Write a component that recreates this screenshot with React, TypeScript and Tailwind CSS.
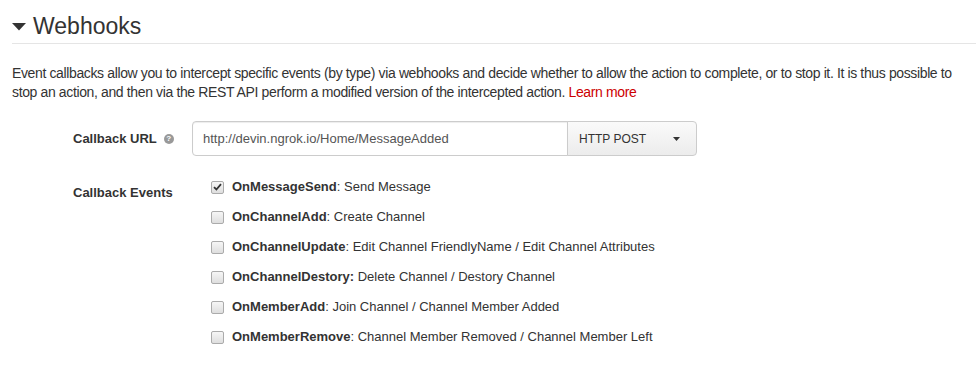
import React from "react";

const events: [string, string, boolean, boolean][] = [
  ["OnMessageSend", "Send Message", true, false],
  ["OnChannelAdd", "Create Channel", false, false],
  ["OnChannelUpdate", "Edit Channel FriendlyName / Edit Channel Attributes", false, false],
  ["OnChannelDestory", "Delete Channel / Destory Channel", false, true],
  ["OnMemberAdd", "Join Channel / Channel Member Added", false, false],
  ["OnMemberRemove", "Channel Member Removed / Channel Member Left", false, false],
];

function Box({ checked }: { checked: boolean }) {
  return (
    <span className="w-[13px] h-[13px] rounded-[2px] border border-[#ababab] bg-gradient-to-b from-[#f6f6f6] to-[#dedede] flex items-center justify-center shrink-0">
      {checked && (
        <svg width="9" height="8" viewBox="0 0 9 8">
          <path d="M1 4.2 L3.4 6.5 L8 1.2" stroke="#333" strokeWidth="1.8" fill="none" />
        </svg>
      )}
    </span>
  );
}

export default function App() {
  return (
    <div className="w-[976px] h-[371px] bg-white text-[#333] overflow-hidden" style={{ fontFamily: '"Liberation Sans", Arial, sans-serif' }}>
      <div className="pl-[12px] pt-[11px]">
        <div className="flex items-center h-[30px]">
          <svg width="14" height="8" viewBox="0 0 14 8" className="mr-[7px] mt-[1px]">
            <path d="M0 0 L14 0 L7 7.5 Z" fill="#333" />
          </svg>
          <span className="text-[23px] leading-[30px]">Webhooks</span>
        </div>
        <div className="mt-[2px] h-[1px] bg-[#e5e5e5]" />
        <p className="mt-[20px] pr-[10px] text-[14px] leading-[19px] tracking-[-0.37px]">
          Event callbacks allow you to intercept specific events (by type) via webhooks and decide whether to allow the action to complete, or to stop it. It is thus possible to stop an action, and then via the REST API perform a modified version of the intercepted action.{" "}
          <span className="text-[#cc0000]">Learn more</span>
        </p>
        <div className="mt-[19px] flex items-center">
          <div className="w-[180px] pl-[61px] flex items-center text-[13px] font-bold">
            Callback URL
            <span className="ml-[7px] w-[10px] h-[10px] rounded-full bg-[#999] text-white text-[8px] leading-[10px] text-center font-bold">?</span>
          </div>
          <div className="flex h-[35px]">
            <div className="w-[376px] border border-[#ccc] rounded-l-[4px] flex items-center pl-[10px] text-[13px] text-[#555] shadow-[inset_0_1px_1px_rgba(0,0,0,0.075)]">
              http://devin.ngrok.io/Home/MessageAdded
            </div>
            <div className="w-[130px] -ml-[1px] border border-[#ccc] rounded-r-[4px] bg-gradient-to-b from-[#fafafa] to-[#ececec] flex items-center pl-[11px] pr-[16px] justify-between text-[12px] text-[#333]">
              <span>HTTP POST</span>
              <svg width="7" height="4" viewBox="0 0 7 4"><path d="M0 0 L7 0 L3.5 4 Z" fill="#333" /></svg>
            </div>
          </div>
        </div>
        <div className="mt-[16px] flex">
          <div className="w-[199px] pl-[61px] text-[13px] font-bold pt-[11px]">Callback Events</div>
          <div className="flex flex-col">
            {events.map(([name, desc, checked, colonBold]) => (
              <div key={name} className="h-[30px] flex items-center text-[13px]">
                <Box checked={checked} />
                <span className="ml-[8px]">
                  <b>{name}{colonBold ? ":" : ""}</b>
                  {colonBold ? " " : ": "}
                  {desc}
                </span>
              </div>
            ))}
          </div>
        </div>
      </div>
    </div>
  );
}
